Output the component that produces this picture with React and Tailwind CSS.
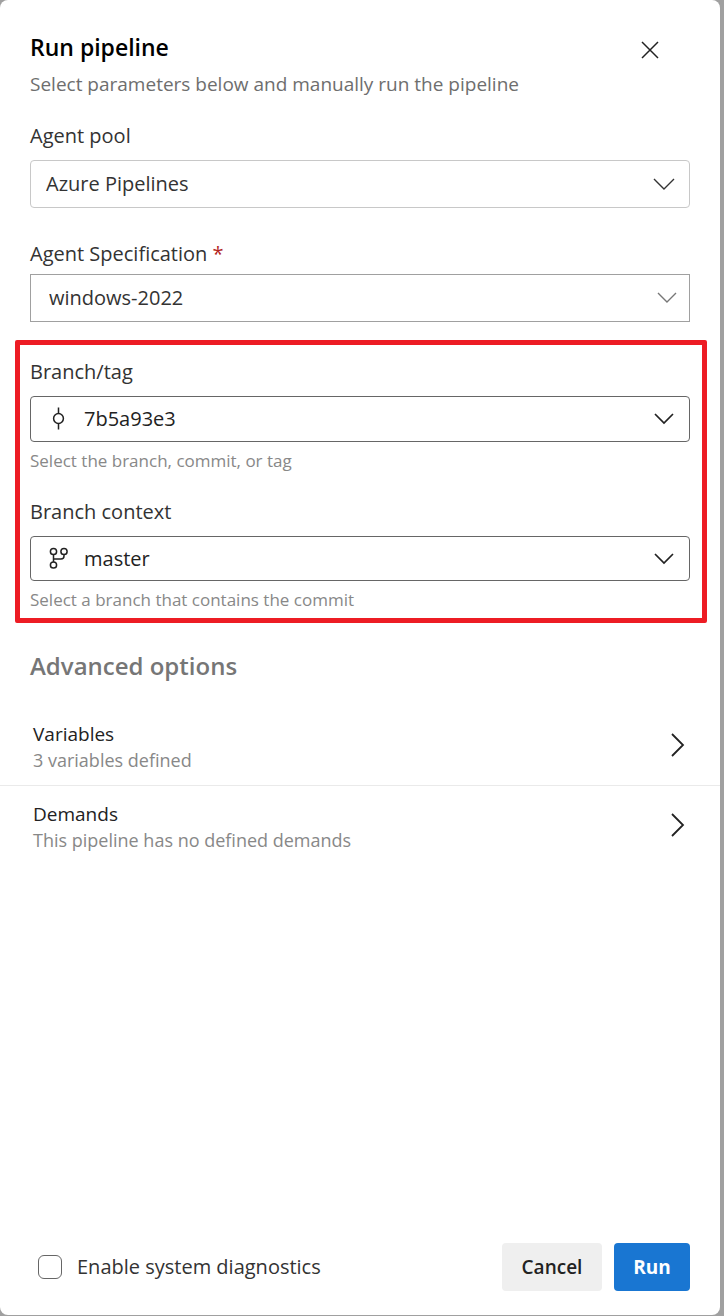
import { useState } from 'react'

const CHEVRON = 'pointer-events-none col-start-1 row-start-1 self-center justify-self-end'

function ChevronDown({ className, width = 18, strokeWidth = 1.4 }) {
  return (
    <svg className={`${CHEVRON} ${className}`} width={width + 4} height="14" viewBox={`0 0 ${width + 4} 14`} fill="none" stroke="currentColor" strokeWidth={strokeWidth} aria-hidden="true">
      <path d={`M2 2 L${width / 2 + 2} ${width / 2 + 2} L${width + 2} 2`} />
    </svg>
  )
}

function ChevronRight() {
  return (
    <svg width="16" height="28" viewBox="0 0 16 28" fill="none" stroke="currentColor" strokeWidth="1.8" aria-hidden="true">
      <path d="M2 2 L13 13 L2 24" />
    </svg>
  )
}

function CommitIcon() {
  return (
    <svg className="pointer-events-none col-start-1 row-start-1 self-center ml-[18px]" width="20" height="24" viewBox="0 0 20 24" fill="none" stroke="currentColor" strokeWidth="1.5" aria-hidden="true">
      <circle cx="10.5" cy="11.5" r="4.9" />
      <path d="M10.5 0.5 V6.6 M10.5 16.4 V22.5" />
    </svg>
  )
}

function BranchIcon() {
  return (
    <svg className="pointer-events-none col-start-1 row-start-1 self-center ml-[18px]" width="22" height="24" viewBox="0 0 22 24" fill="none" stroke="currentColor" strokeWidth="1.5" aria-hidden="true">
      <circle cx="5.5" cy="4.5" r="3.1" />
      <circle cx="16" cy="4.5" r="3.1" />
      <circle cx="5.5" cy="18" r="3.1" />
      <path d="M5.5 7.6 V14.9 M5.5 12 H13 Q16 12 16 9 V7.6" />
    </svg>
  )
}

const OPTION_ROWS = [
  { title: 'Variables', detail: '3 variables defined' },
  { title: 'Demands', detail: 'This pipeline has no defined demands' },
]

export default function App() {
  const [diagnostics, setDiagnostics] = useState(false)

  return (
    <div className="min-h-screen flex bg-[#a0a0a0] pr-1 pb-px font-['Open_Sans',sans-serif] text-xl leading-7 text-[#333]">
      <form className="flex-1 flex flex-col bg-white rounded-lg" onSubmit={e => e.preventDefault()}>
        <header className="flex justify-between items-start pt-[31px] px-[30px]">
          <div>
            <h1 className="text-[23px] leading-8 font-semibold text-black">Run pipeline</h1>
            <p className="mt-[7px] text-[19px] font-medium text-[#6e6e6e]">Select parameters below and manually run the pipeline</p>
          </div>
          <button type="button" aria-label="Close" className="mt-[9px] mr-[30px] text-[#222]">
            <svg width="20" height="20" viewBox="0 0 20 20" fill="none" stroke="currentColor" strokeWidth="1.5" aria-hidden="true">
              <path d="M2 2 L18 18 M18 2 L2 18" />
            </svg>
          </button>
        </header>

        <div className="px-[30px] pt-6">
          <label htmlFor="pool" className="block">Agent pool</label>
          <div className="grid mt-[10px]">
            <select id="pool" className="col-start-1 row-start-1 appearance-none h-12 pl-[15px] pr-12 border border-[#c8c8c8] rounded-sm bg-white">
              <option>Azure Pipelines</option>
            </select>
            <ChevronDown className="mr-[14px]" width={20} />
          </div>
        </div>

        <div className="px-[30px] pt-8">
          <label htmlFor="spec" className="block">Agent Specification <span className="text-[#b3261e]">*</span></label>
          <div className="grid mt-[6px]">
            <select id="spec" required className="col-start-1 row-start-1 appearance-none h-12 pl-[18px] pr-12 border border-[#a0a0a0] bg-white">
              <option>windows-2022</option>
            </select>
            <ChevronDown className="mr-3 text-[#777]" />
          </div>
        </div>

        {/* highlighted branch fields */}
        <section className="mt-[18px] ml-[15px] mr-[13px] border-5 border-[#ed1c24] rounded-xs pt-[13px] pb-[6px] pl-[10px] pr-3">
          <label htmlFor="branch" className="block">Branch/tag</label>
          <div className="grid mt-[10px] text-[#222]">
            <select id="branch" className="col-start-1 row-start-1 appearance-none h-[46px] pl-[53px] pr-12 border border-[#666] rounded-sm bg-white">
              <option>7b5a93e3</option>
            </select>
            <CommitIcon />
            <ChevronDown className="mr-[15px]" strokeWidth={1.7} />
          </div>
          <p className="mt-[7px] text-[17px] leading-6 text-[#888]">Select the branch, commit, or tag</p>

          <label htmlFor="context" className="block mt-[25px]">Branch context</label>
          <div className="grid mt-[10px] text-[#222]">
            <select id="context" className="col-start-1 row-start-1 appearance-none h-[45px] pl-[53px] pr-12 border border-[#666] rounded-sm bg-white">
              <option>master</option>
            </select>
            <BranchIcon />
            <ChevronDown className="mr-[15px]" strokeWidth={1.7} />
          </div>
          <p className="mt-[7px] text-[17px] leading-6 text-[#888]">Select a branch that contains the commit</p>
        </section>

        <h2 className="mt-[27px] px-[30px] text-2xl leading-8 font-semibold text-[#767676]">Advanced options</h2>

        <div className="mt-6 divide-y divide-[#eaeaea]">
          {OPTION_ROWS.map(row => (
            <button key={row.title} type="button" className="w-full h-20 flex items-center justify-between pl-[33px] pr-[34px] text-left text-[#222]">
              <span>
                <span className="block text-[19px]">{row.title}</span>
                <span className="block text-lg leading-6 text-[#888]">{row.detail}</span>
              </span>
              <ChevronRight />
            </button>
          ))}
        </div>

        <footer className="mt-auto flex items-center gap-3 pl-[38px] pr-[30px] pb-6">
          <label className="mr-auto flex items-center gap-[15px]">
            <input type="checkbox" checked={diagnostics} onChange={e => setDiagnostics(e.target.checked)} className="appearance-none size-6 border border-[#666] rounded-md checked:bg-[#1976d2]" />
            Enable system diagnostics
          </label>
          <button type="button" className="w-[100px] h-12 rounded-sm bg-[#efefef] text-[19px] font-semibold text-[#222]">Cancel</button>
          <button type="submit" className="w-[76px] h-12 rounded-sm bg-[#1976d2] text-[19px] font-bold text-white">Run</button>
        </footer>
      </form>
    </div>
  )
}
